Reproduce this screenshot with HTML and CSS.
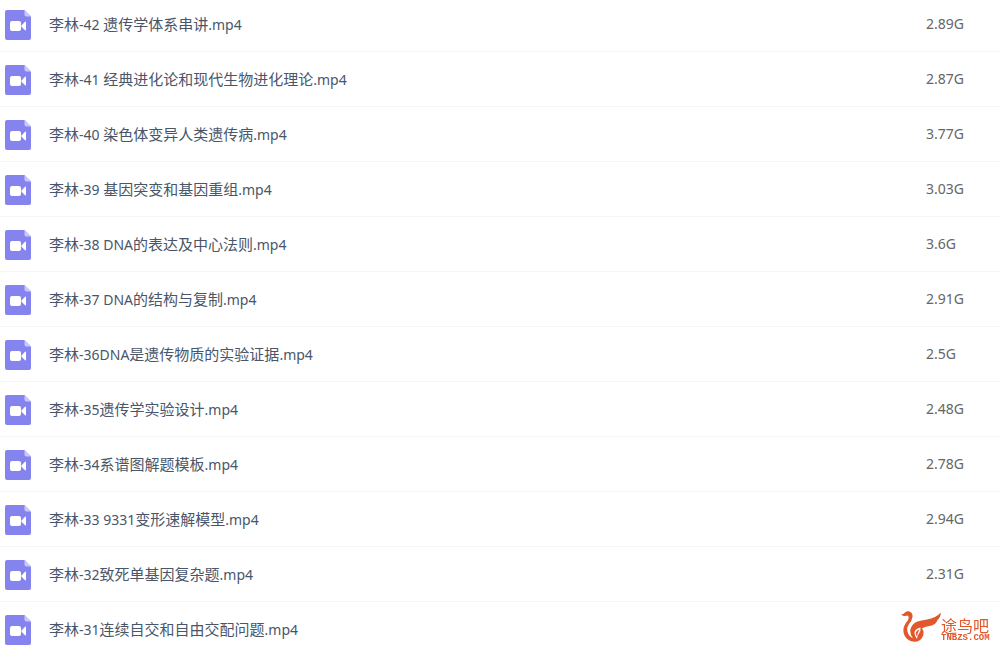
FILE: index.html
```html
<!DOCTYPE html>
<html lang="zh-CN">
<head>
<meta charset="utf-8">
<title>李林</title>
<link rel="stylesheet" href="styles.css">
</head>
<body>
<svg class="defs" aria-hidden="true">
  <symbol id="video" viewBox="0 0 26 30">
    <path d="M2 0H19.500L26 6.500V28Q26 30 24 30H2Q0 30 0 28V2Q0 0 2 0Z" fill="#8583ee"/>
    <path d="M19.500 0L26 6.500H21.500Q19.500 6.500 19.500 4.500Z" fill="#c9c8fa"/>
    <rect x="5" y="11" width="11" height="10" rx="2" fill="#fff"/>
    <path d="M16.500 15.500L20 11.800Q21 11.200 21 12.300V19.700Q21 20.800 20 20.200L16.500 16.800Z" fill="#fff"/>
  </symbol>
</svg>
<table class="files">
  <tbody>
    <tr><td class="icon"><svg><use href="#video"/></svg></td><td class="name">李林<span>-42 </span>遗传学体系串讲<span>.mp4</span></td><td class="size">2.89G</td></tr>
    <tr><td class="icon"><svg><use href="#video"/></svg></td><td class="name">李林<span>-41 </span>经典进化论和现代生物进化理论<span>.mp4</span></td><td class="size">2.87G</td></tr>
    <tr><td class="icon"><svg><use href="#video"/></svg></td><td class="name">李林<span>-40 </span>染色体变异人类遗传病<span>.mp4</span></td><td class="size">3.77G</td></tr>
    <tr><td class="icon"><svg><use href="#video"/></svg></td><td class="name">李林<span>-39 </span>基因突变和基因重组<span>.mp4</span></td><td class="size">3.03G</td></tr>
    <tr><td class="icon"><svg><use href="#video"/></svg></td><td class="name">李林<span>-38 DNA</span>的表达及中心法则<span>.mp4</span></td><td class="size">3.6G</td></tr>
    <tr><td class="icon"><svg><use href="#video"/></svg></td><td class="name">李林<span>-37 DNA</span>的结构与复制<span>.mp4</span></td><td class="size">2.91G</td></tr>
    <tr><td class="icon"><svg><use href="#video"/></svg></td><td class="name">李林<span>-36DNA</span>是遗传物质的实验证据<span>.mp4</span></td><td class="size">2.5G</td></tr>
    <tr><td class="icon"><svg><use href="#video"/></svg></td><td class="name">李林<span>-35</span>遗传学实验设计<span>.mp4</span></td><td class="size">2.48G</td></tr>
    <tr><td class="icon"><svg><use href="#video"/></svg></td><td class="name">李林<span>-34</span>系谱图解题模板<span>.mp4</span></td><td class="size">2.78G</td></tr>
    <tr><td class="icon"><svg><use href="#video"/></svg></td><td class="name">李林<span>-33 9331</span>变形速解模型<span>.mp4</span></td><td class="size">2.94G</td></tr>
    <tr><td class="icon"><svg><use href="#video"/></svg></td><td class="name">李林<span>-32</span>致死单基因复杂题<span>.mp4</span></td><td class="size">2.31G</td></tr>
    <tr><td class="icon"><svg><use href="#video"/></svg></td><td class="name">李林<span>-31</span>连续自交和自由交配问题<span>.mp4</span></td><td class="size"></td></tr>
  </tbody>
</table>
<div class="brand">
  <svg class="bird" viewBox="0 0 40 31" aria-hidden="true">
    <path d="M0 3.500Q2.500 3.300 4 1.500Q6 -.3 8.500 .5Q12 2 11.500 6Q11 9.500 8 13Q5.500 16.500 6.500 20.500Q7.500 25 12 27.300Q8.500 23 9.500 18Q11 12.500 16.500 10.500Q20 9.300 26 8.500Q35 7 39.800 1.500Q39.800 6 36.500 9Q35 14 28.500 15Q25 15.500 21 17.300Q23.500 21 22 25Q19.500 30.800 13.500 30.800Q6.500 30.500 3.500 24.500Q.8 18 4.500 12.500Q8.500 8 7.500 5.500Q6.500 4 4.500 5Q2.500 5.500 0 3.500Z" fill="#e2572b"/>
    <path d="M19.500 16.500Q13 18 13.500 22.500Q13.800 25 16 28Q16.300 24.500 18 22.500Q20 20 19.500 16.500Z" fill="#fff"/>
    <path d="M18.500 18.500Q14.500 20 14.800 23L16 25.500Q16.300 22 18.500 18.500Z" fill="#e2572b"/>
  </svg>
  <div class="words"><strong>途鸟吧</strong><small>TNBZS.COM</small></div>
</div>
</body>
</html>
```
FILE: styles.css
```css
body {
  margin: 0;
  overflow: hidden;
  background: #fff;
  font-family: "Noto Sans", "Noto Sans CJK SC", sans-serif;
  font-size: 15px;
  line-height: 20px;
}

.defs {
  position: absolute;
  width: 0;
  height: 0;
}

.files {
  width: 100%;
  margin-top: -3px;
  border-collapse: separate;
  border-spacing: 0;
  table-layout: fixed;
}

.files td {
  height: 54px;
  padding: 0;
  border-bottom: 1px solid #f4f5f6;
}

.files .icon {
  width: 44px;
  padding-left: 5px;
}

.icon svg {
  display: block;
  width: 26px;
  height: 30px;
  margin-top: 2px;
}

.name {
  color: #49566a;
  white-space: nowrap;
}

.name span {
  font-size: 14px;
}

.files .size {
  width: 74px;
  color: #666;
  font-size: 14px;
}

.brand {
  position: fixed;
  right: 9px;
  bottom: 5px;
  display: flex;
  align-items: flex-end;
  color: #e2572b;
}

.bird {
  width: 40px;
  height: 31px;
}

.words {
  display: flex;
  flex-direction: column;
  width: 50px;
}

.words strong {
  font-size: 16px;
  font-weight: 400;
  line-height: 16px;
}

.words small {
  font-family: "Liberation Mono", monospace;
  font-size: 9px;
  font-weight: bold;
  line-height: 8px;
}
```
